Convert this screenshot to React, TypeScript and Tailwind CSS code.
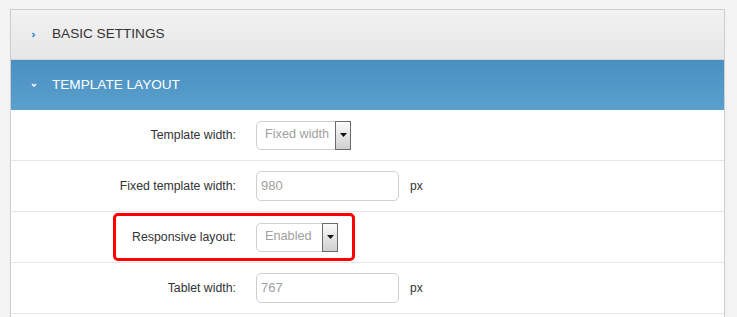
import React from 'react'

const font = { fontFamily: '"Liberation Sans", Arial, sans-serif' }

function Chevron({ dir, color }: { dir: 'right' | 'down'; color: string }) {
  return dir === 'right' ? (
    <svg width="6" height="6" viewBox="0 0 6 6" className="shrink-0">
      <path d="M1.5 1 L3.5 3 L1.5 5" fill="none" stroke={color} strokeWidth="1.5" />
    </svg>
  ) : (
    <svg width="6" height="6" viewBox="0 0 6 6" className="shrink-0">
      <path d="M1 2 L3 4 L5 2" fill="none" stroke={color} strokeWidth="1.5" />
    </svg>
  )
}

function SelectBox({ value, width }: { value: string; width: string }) {
  return (
    <div className={`flex h-[29px] ${width} items-stretch rounded-[5px] border border-[#cfcfcf] bg-white`}>
      <span className="flex flex-1 items-center pl-[8px] text-[12.7px] text-[#a0a0a0]">{value}</span>
      <span className="-my-px -mr-px flex w-[16px] items-center justify-center border border-[#6b6b6b] bg-gradient-to-b from-[#fbfbfb] to-[#cfcfcf]">
        <svg width="7" height="4" viewBox="0 0 7 4">
          <path d="M0 0 H7 L3.5 4 Z" fill="#111" />
        </svg>
      </span>
    </div>
  )
}

function TextBox({ value }: { value: string }) {
  return (
    <div className="flex h-[30px] w-[143px] items-center rounded-[5px] border border-[#cfcfcf] bg-white pl-[4px] text-[13px] text-[#a0a0a0]">
      {value}
    </div>
  )
}

function Row({ label, children, highlight }: { label: string; children: React.ReactNode; highlight?: boolean }) {
  return (
    <div className="relative flex h-[51px] items-center border-b border-[#e6e6e6]">
      <div className="w-[225px] text-right text-[12.3px] text-[#333]">{label}</div>
      <div className="ml-[20px] flex items-center">{children}</div>
      {highlight && (
        <div className="absolute left-[102px] top-[1px] h-[48px] w-[242px] rounded-[5px] border-[3px] border-[#ff0000]" />
      )}
    </div>
  )
}

export default function App() {
  return (
    <div className="h-[317px] w-[737px] overflow-hidden bg-[#f3f3f3] pl-[10px] pt-[9px]" style={font}>
      <div className="w-[715px] border border-[#cdcdcd] bg-white">
        {/* Collapsed section */}
        <div className="flex h-[50px] items-center gap-[15px] border-b border-[#d4d4d4] bg-gradient-to-b from-[#f2f2f2] to-[#e6e6e6] pl-[20px]">
          <Chevron dir="right" color="#3d8ac4" />
          <span className="text-[13.6px] text-[#333]">BASIC SETTINGS</span>
        </div>

        {/* Open section */}
        <div className="flex h-[50px] items-center gap-[15px] bg-gradient-to-b from-[#4a8fc1] to-[#5aa0cd] pl-[20px]">
          <Chevron dir="down" color="#ffffff" />
          <span className="text-[13.6px] text-white">TEMPLATE LAYOUT</span>
        </div>

        <Row label="Template width:">
          <SelectBox value="Fixed width" width="w-[95px]" />
        </Row>
        <Row label="Fixed template width:">
          <TextBox value="980" />
          <span className="ml-[11px] text-[12px] text-[#333]">px</span>
        </Row>
        <Row label="Responsive layout:" highlight>
          <SelectBox value="Enabled" width="w-[82px]" />
        </Row>
        <Row label="Tablet width:">
          <TextBox value="767" />
          <span className="ml-[11px] text-[12px] text-[#333]">px</span>
        </Row>
        <div className="h-[20px]" />
      </div>
    </div>
  )
}
